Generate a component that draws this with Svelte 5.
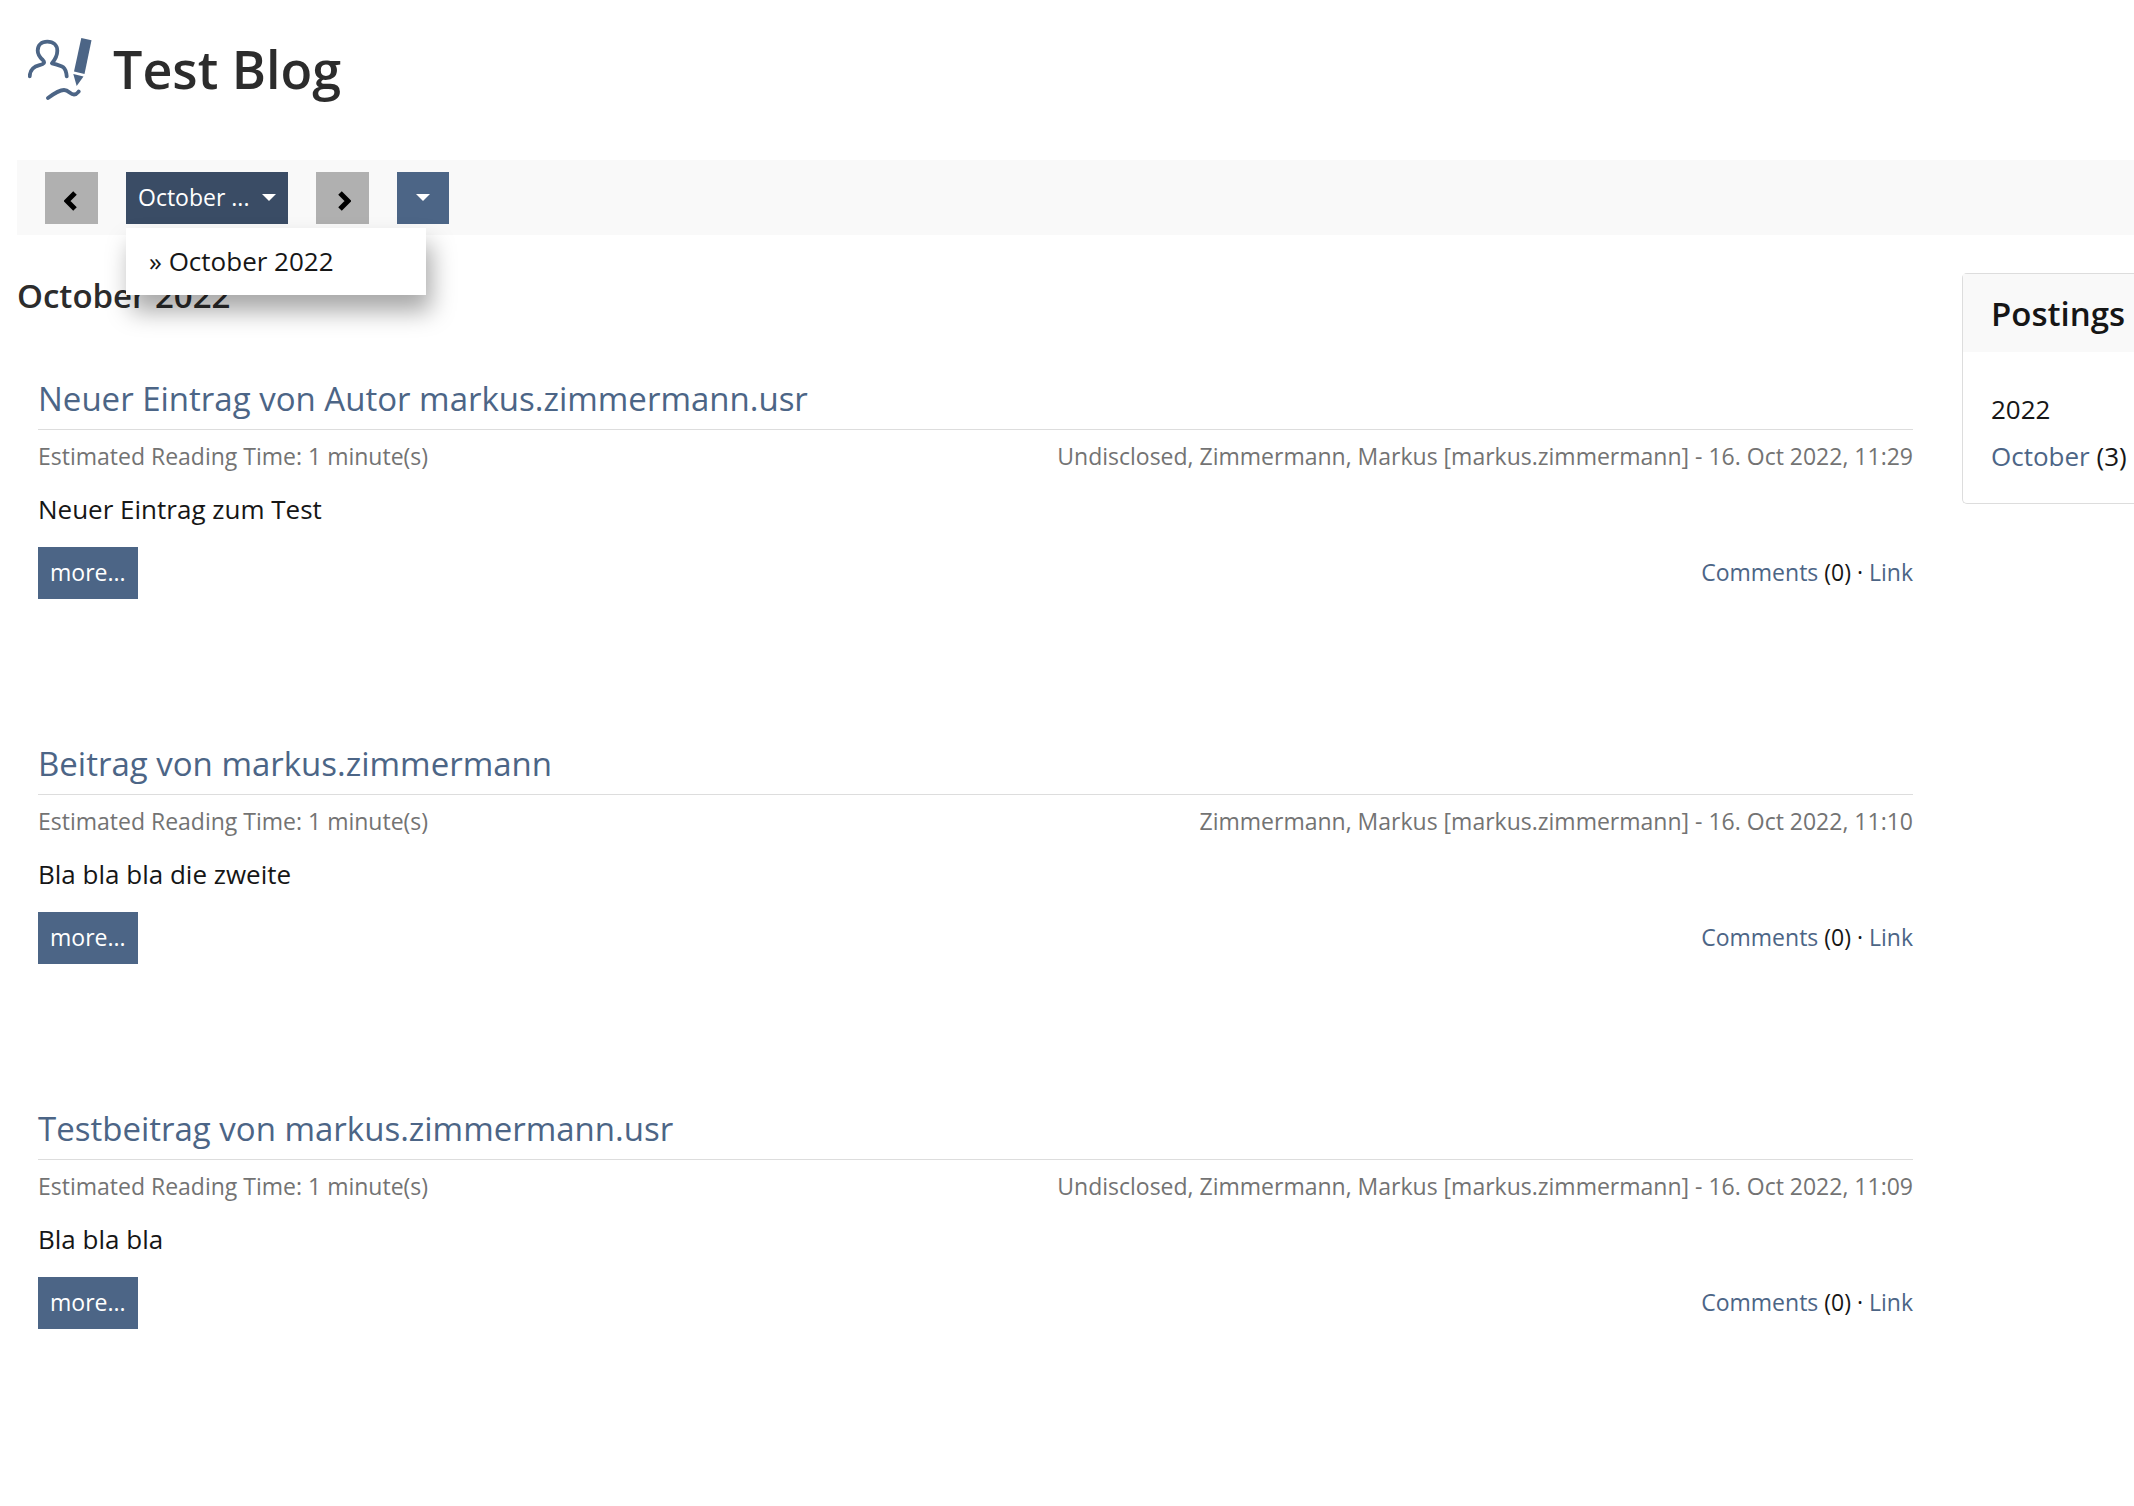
<script>
  let monthOpen = $state(true);

  const months = ['October 2022'];

  const postings = [
    {
      title: 'Neuer Eintrag von Autor markus.zimmermann.usr',
      author: 'Undisclosed, Zimmermann, Markus [markus.zimmermann]',
      date: '16. Oct 2022, 11:29',
      text: 'Neuer Eintrag zum Test',
      comments: 0
    },
    {
      title: 'Beitrag von markus.zimmermann',
      author: 'Zimmermann, Markus [markus.zimmermann]',
      date: '16. Oct 2022, 11:10',
      text: 'Bla bla bla die zweite',
      comments: 0
    },
    {
      title: 'Testbeitrag von markus.zimmermann.usr',
      author: 'Undisclosed, Zimmermann, Markus [markus.zimmermann]',
      date: '16. Oct 2022, 11:09',
      text: 'Bla bla bla',
      comments: 0
    }
  ];
</script>

<div class="page">
  <header class="page-header">
    <svg class="logo" viewBox="0 0 64 62" aria-hidden="true">
      <g fill="none" stroke="#4c6586" stroke-width="3.8" stroke-linecap="round" stroke-linejoin="round">
        <path d="M1.7 38.3C2 31 6 28.600 11.500 27.200C16 26 17.300 24.500 14.800 22C11.500 19 9.700 16 9.700 12.500C9.700 7 13.500 3.700 19.300 3.700C25.500 3.700 29.300 7.500 29.300 12.800C29.300 17 28 20.500 24 25.300C29 26.500 33 27.500 35.300 29.300C38 31.500 38.300 34 38.700 38.300" />
        <path d="M20 60C26 55.500 31 52 36 52C41 52 42 56.500 46 56.500C48.500 56.500 49.500 55 50.700 53.500" />
      </g>
      <path d="M53.300 0L63.500 2.300L56.500 36L46 33.500Z" fill="#4c6586" />
      <path d="M45.300 36L55.500 38.500L48.700 48Z" fill="#4c6586" />
    </svg>
    <h1>Test Blog</h1>
  </header>

  <nav class="toolbar" aria-label="Months">
    <button class="btn btn-nav" aria-label="Previous month">
      <svg viewBox="0 0 16 20" aria-hidden="true"><path d="M11 2L3 10L11 18" /></svg>
    </button>
    <div class="dropdown">
      <button class="btn btn-month" class:open={monthOpen} aria-expanded={monthOpen} onclick={() => (monthOpen = !monthOpen)}>
        October ... <span class="caret"></span>
      </button>
      {#if monthOpen}
        <ul class="menu">
          {#each months as month}
            <li><a href="#month">» {month}</a></li>
          {/each}
        </ul>
      {/if}
    </div>
    <button class="btn btn-nav" aria-label="Next month">
      <svg viewBox="0 0 16 20" aria-hidden="true"><path d="M5 2L13 10L5 18" /></svg>
    </button>
    <button class="btn btn-actions" aria-label="Actions"><span class="caret"></span></button>
  </nav>

  <div class="columns">
    <main>
      <h2>October 2022</h2>
      {#each postings as posting}
        <article>
          <h3><a href="#posting">{posting.title}</a></h3>
          <div class="row meta">
            <span>Estimated Reading Time: 1 minute(s)</span>
            <span>{posting.author} - {posting.date}</span>
          </div>
          <p>{posting.text}</p>
          <div class="row actions">
            <button class="btn">more...</button>
            <span><a href="#comments">Comments</a> ({posting.comments}) · <a href="#link">Link</a></span>
          </div>
        </article>
      {/each}
    </main>

    <aside>
      <h2>Postings</h2>
      <div class="panel-body">
        <div>2022</div>
        <div><a href="#october">October</a> ({postings.length})</div>
      </div>
    </aside>
  </div>
</div>

<style>
  :global(body) {
    margin: 0;
    background: #fff;
  }
  .page {
    font-family: "Open Sans", "Noto Sans", sans-serif;
    font-size: 26px;
    line-height: 36px;
    color: #161616;
    padding-left: 17px;
    overflow-x: hidden;
  }
  h1, h2, h3, p, ul {
    margin: 0;
    padding: 0;
  }
  a {
    color: #4c6586;
    text-decoration: none;
  }

  .page-header {
    display: flex;
    align-items: center;
    gap: 21px;
    height: 138px;
    padding-left: 11px;
    margin-bottom: 22px;
  }
  .logo {
    width: 64px;
    height: 62px;
  }
  h1 {
    font-size: 52px;
    line-height: 72px;
    font-weight: 600;
    color: #2c2c2c;
  }

  .toolbar {
    display: flex;
    align-items: flex-start;
    gap: 28px;
    padding: 12px 28px 11px;
    background: #f9f9f9;
  }
  .btn {
    display: flex;
    align-items: center;
    justify-content: center;
    height: 52px;
    padding: 0 12px 2px;
    border: none;
    background: #4c6586;
    color: #fff;
    font-family: inherit;
    font-size: 23px;
    line-height: 32px;
    cursor: pointer;
  }
  .btn-nav {
    width: 53px;
    padding: 5px 0 0;
    background: #b0b0b0;
  }
  .btn-nav svg {
    width: 16px;
    height: 20px;
    fill: none;
    stroke: #000;
    stroke-width: 5;
  }
  .btn-month {
    width: 162px;
    justify-content: space-between;
    white-space: nowrap;
  }
  .btn-month.open {
    background: #3a4c65;
  }
  .btn-actions {
    width: 52px;
  }
  .caret {
    border-top: 7px solid #fff;
    border-left: 7px solid transparent;
    border-right: 7px solid transparent;
  }
  .dropdown {
    position: relative;
  }
  .menu {
    position: absolute;
    top: 56px;
    left: 0;
    z-index: 10;
    width: 300px;
    list-style: none;
    background: #fff;
    box-shadow: 5px 16px 24px rgba(0, 0, 0, 0.35);
  }
  .menu a {
    display: block;
    padding: 15px 23px 16px;
    color: #161616;
  }

  .columns {
    display: flex;
    align-items: flex-start;
    gap: 49px;
    padding-top: 38px;
  }
  main {
    flex: 1;
    min-width: 0;
  }
  h2 {
    font-size: 33px;
    line-height: 44px;
    font-weight: 600;
    color: #2c2c2c;
  }
  main h2 {
    padding-top: 1px;
    margin-bottom: 55px;
  }
  article {
    padding-left: 21px;
    margin-bottom: 139px;
  }
  h3 {
    padding-bottom: 4px;
    border-bottom: 1px solid #dddddd;
    font-size: 33px;
    line-height: 52px;
    font-weight: 400;
  }
  .row {
    display: flex;
    justify-content: space-between;
    font-size: 23px;
    line-height: 32px;
  }
  .meta {
    padding: 10px 0 19px;
    color: #737373;
  }
  p {
    margin-bottom: 20px;
  }
  .actions {
    align-items: center;
  }
  .actions span {
    padding-bottom: 2px;
  }

  aside {
    flex: 0 0 172px;
    box-sizing: border-box;
    border: 1px solid #dddddd;
    border-right: none;
    border-radius: 5px 0 0 5px;
    white-space: nowrap;
  }
  aside h2 {
    padding: 18px 0 16px 28px;
    background: #f9f9f9;
    color: #161616;
  }
  .panel-body {
    padding: 34px 0 23px 28px;
    line-height: 47px;
  }
</style>
